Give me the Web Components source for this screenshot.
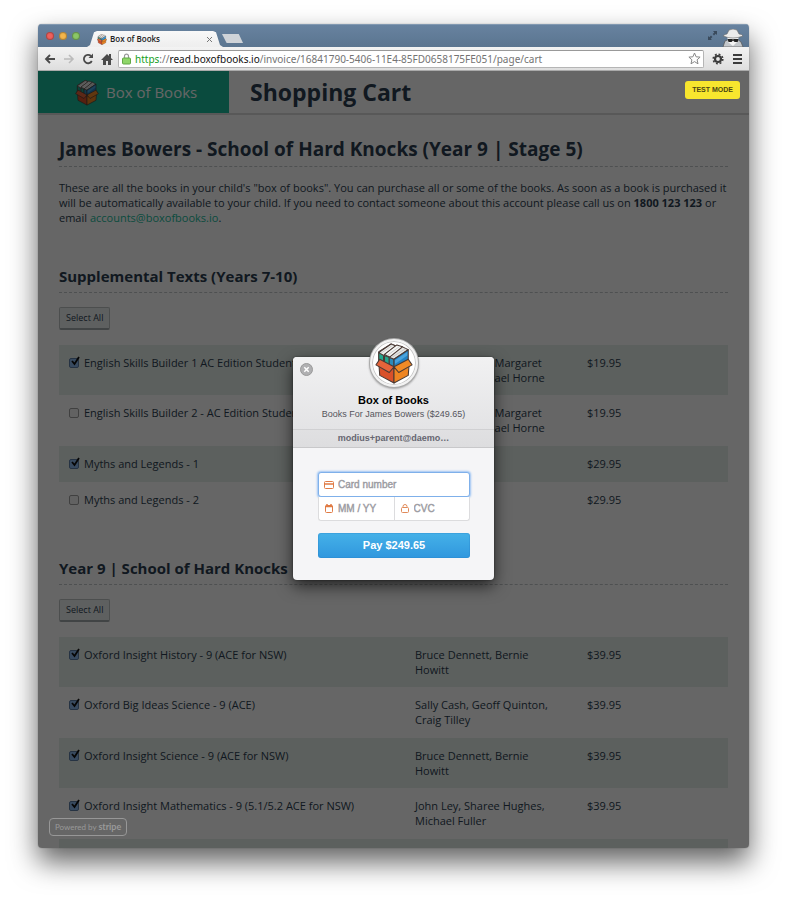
<!DOCTYPE html>
<html lang="en">
<head>
<meta charset="utf-8">
<title>Box of Books</title>
<style>
  html { height: 100%; background: #fff; }
  body {
    box-sizing: border-box; height: 100%; margin: 0; padding: 24px 38px 52px; overflow: hidden;
    font: 11px/15px "Open Sans", "Noto Sans", sans-serif; color: #2c3e50;
  }
</style>
</head>
<body>
<browser-window tab-title="Box of Books">
  <span slot="address"><span style="color:#15a01c">https</span>://<span style="color:#111">read.boxofbooks.io</span>/invoice/16841790-5406-11E4-85FD0658175FE051/page/cart</span>
  <cart-header heading="Shopping Cart">Box of Books</cart-header>
  <cart-intro heading="James Bowers - School of Hard Knocks (Year 9 | Stage 5)">These are all the books in your child's "box of books". You can purchase all or some of the books. As soon as a book is purchased it will be automatically available to your child. If you need to contact someone about this account please call us on <b>1800 123 123</b> or email <a href="mailto:accounts@boxofbooks.io" style="color:#1abc9c;text-decoration:none">accounts@boxofbooks.io</a>.</cart-intro>
  <book-section heading="Supplemental Texts (Years 7-10)">
    <book-item checked price="$19.95" authors="Mary Manning, Margaret McKenzie, Rachael Horne">English Skills Builder 1 AC Edition Student Book</book-item>
    <book-item price="$19.95" authors="Mary Manning, Margaret McKenzie, Rachael Horne">English Skills Builder 2 - AC Edition Student Book</book-item>
    <book-item checked price="$29.95" authors="Paul Stephens">Myths and Legends - 1</book-item>
    <book-item price="$29.95" authors="Paul Stephens">Myths and Legends - 2</book-item>
  </book-section>
  <book-section heading="Year 9 | School of Hard Knocks">
    <book-item checked price="$39.95" authors="Bruce Dennett, Bernie Howitt">Oxford Insight History - 9 (ACE for NSW)</book-item>
    <book-item checked price="$39.95" authors="Sally Cash, Geoff Quinton, Craig Tilley">Oxford Big Ideas Science - 9 (ACE)</book-item>
    <book-item checked price="$39.95" authors="Bruce Dennett, Bernie Howitt">Oxford Insight Science - 9 (ACE for NSW)</book-item>
    <book-item checked price="$39.95" authors="John Ley, Sharee Hughes, Michael Fuller">Oxford Insight Mathematics - 9 (5.1/5.2 ACE for NSW)</book-item>
    <book-item price="" authors=""></book-item>
  </book-section>
  <checkout-overlay slot="overlay">
    <checkout-dialog name="Box of Books" description="Books For James Bowers ($249.65)" email="modius+parent@daemo…" amount="$249.65"></checkout-dialog>
  </checkout-overlay>
</browser-window>

<script>
function define(name, html, setup) {
  const template = document.createElement('template');
  template.innerHTML = html;
  customElements.define(name, class extends HTMLElement {
    connectedCallback() {
      if (this.shadowRoot) return;
      const root = this.attachShadow({ mode: 'open' });
      root.append(template.content.cloneNode(true));
      root.querySelectorAll('[data-attr]').forEach(n => { n.textContent = this.getAttribute(n.dataset.attr); });
      if (setup) setup(this, root);
    }
  });
}

/* Open carton holding three books */
define('box-logo', `
<style>:host{display:block;flex:none} svg{display:block;width:100%;height:100%}</style>
<svg viewBox="-1 -1 40 44" aria-hidden="true" stroke="#4a3a35" stroke-width="1.1" stroke-linejoin="round">
  <path d="M3 9 L16 1 L21 3 L21 22 L3 20Z" fill="#e9e9e9"/>
  <path d="M3 10 L8 13 V26 L3 23Z" fill="#23a68c"/>
  <path d="M3 10 L16 1 L21 3 L8 13Z" fill="#f1f1ef"/>
  <path d="M5 11 L18 2" stroke="#bbb" fill="none" stroke-width=".7"/>
  <path d="M9 13 L14 15 V28 L9 26Z" fill="#23a68c"/>
  <path d="M14 15 L19 17 V29 L14 28Z" fill="#2d8ab9"/>
  <path d="M9 12 L22 2 L28 4 L15 15Z" fill="#f5f5f3"/>
  <path d="M14 15 L28 4 L34 7 L19 17Z" fill="#e4e4e2"/>
  <path d="M12 13 L25 3.500 M17 15 L31 6" stroke="#bbb" fill="none" stroke-width=".7"/>
  <path d="M19 17 L34 7 V22 L19 29Z" fill="#2382c4"/>
  <path d="M20 18 L33 9.500 V13 L20 22Z" fill="#4aa3dc" stroke="none"/>
  <path d="M3 21 L19 27 V42 L4 34Z" fill="#d9502a"/>
  <path d="M35 21 L19 27 V42 L34 34Z" fill="#ee8522"/>
  <path d="M4 17 L19 25 L14 31 L0 23Z" fill="#e5643a"/>
  <path d="M34 17 L19 25 L24 31 L38 23Z" fill="#f08a26"/>
</svg>`);

define('browser-window', `
<style>
  :host{display:flex;flex-direction:column;height:100%;border-radius:4px;overflow:hidden;background:#fff;
    box-shadow:0 0 1px rgba(0,0,0,.5),0 14px 28px rgba(0,0,0,.62)}
  .tabs{flex:none;display:flex;align-items:flex-end;height:23px;padding:0 5px 0 8px;
    background:linear-gradient(#6883a0,#5b7590);box-shadow:inset 0 1px #8299b1}
  .lights{display:flex;gap:5px;padding-bottom:7px}
  .lights i{width:8px;height:8px;border-radius:50%;box-shadow:inset 0 0 1px 1px rgba(0,0,0,.3)}
  .tab{display:flex;align-items:center;gap:3px;box-sizing:border-box;width:136px;height:16px;margin-left:7px;padding:0 11px 0 8px;
    background:linear-gradient(#f8f8f8,#eee);clip-path:polygon(0 100%,3px 88%,7px 8%,10px 0,126px 0,129px 8%,133px 88%,100% 100%);
    font:8px/14px "Open Sans","Noto Sans",sans-serif;font-weight:600;color:#222}
  .tab box-logo{width:10px;height:11px;margin-left:2px}
  .tab span{flex:1}
  button{display:flex;padding:0;border:0;background:none;color:inherit}
  .new{width:21px;height:9px;margin:0 0 4px -1px;background:#cfd3d8;clip-path:polygon(0 0,80% 0,100% 100%,22% 100%)}
  .space{flex:1}
  .bar{flex:none;display:flex;align-items:center;box-sizing:border-box;height:24px;padding:0 7px 0 6px;gap:7px;
    background:linear-gradient(#f3f3f3,#dedede);border-bottom:1px solid #aaa;color:#4a4a4a}
  .bar svg{display:block}
  .addr{flex:1;min-width:0;display:flex;align-items:center;box-sizing:border-box;height:18px;margin-left:-2px;padding:0 2px 0 3px;gap:4px;
    border:1px solid #b5b5b5;border-top-color:#999;border-radius:2px;background:#fff;font:10px/16px "Noto Sans",sans-serif;color:#737373;white-space:nowrap}
  .addr .url{flex:1;overflow:hidden}
  main{position:relative;flex:1;min-height:0;overflow:hidden}
</style>
<div class="tabs">
  <div class="lights"><i style="background:#f0605c"></i><i style="background:#f3b54b"></i><i style="background:#8bc766"></i></div>
  <div class="tab"><box-logo></box-logo><span data-attr="tab-title"></span>
    <button aria-label="Close tab"><svg width="5" height="5" viewBox="0 0 5 5"><path d="M0 0L5 5M5 0L0 5" stroke="#777"/></svg></button></div>
  <button class="new" aria-label="New tab"></button>
  <div class="space"></div>
  <svg width="11" height="11" viewBox="0 0 11 11" style="margin:0 4px 6px 0" fill="#3a4a5c"><path d="M6 1h4v4L8.700 3.700 7 5.400 5.700 4 7.300 2.400zM1 6l1.300 1.300L4 5.600 5.400 7 3.700 8.700 5 10H1z"/></svg>
  <svg width="22" height="18" viewBox="0 0 22 18"><path d="M1 18L3 12 8 10h7l4 3 2 5z" fill="#c3c7cb" stroke="#555" stroke-width=".7"/><path d="M5 6h12l-1 6-5 5-5-4z" fill="#f4f4f4"/><path d="M1 7Q3 5 5 5L7 1Q11-1 15 1L17 5Q20 5 21 7 11 11 1 7z" fill="#ececec" stroke="#666" stroke-width=".6"/><path d="M5.500 10h4.500l1 .6 1-.6H16.500l-.8 3h-3L11 11.600 9.500 13h-3z" fill="#222"/></svg>
</div>
<div class="bar">
  <button aria-label="Back"><svg width="12" height="12" viewBox="0 0 12 12"><path d="M11 6H2M6 2L2 6l4 4" fill="none" stroke="currentColor" stroke-width="1.800"/></svg></button>
  <button aria-label="Forward" style="color:#bbb"><svg width="12" height="12" viewBox="0 0 12 12"><path d="M1 6h9M6 2l4 4-4 4" fill="none" stroke="currentColor" stroke-width="1.600"/></svg></button>
  <button aria-label="Reload"><svg width="12" height="12" viewBox="0 0 12 12"><path d="M9.800 8A4.200 4.200 0 1 1 9 3" fill="none" stroke="currentColor" stroke-width="1.800"/><path d="M6.500 5H11V.6z" fill="currentColor"/></svg></button>
  <button aria-label="Home"><svg width="12" height="12" viewBox="0 0 12 12" fill="currentColor"><path d="M6 1L0 7h2v5h3V8h2v4h3V7h2L10 5V1H8v2z"/></svg></button>
  <div class="addr">
    <svg width="9" height="12" viewBox="0 0 9 12"><path d="M2.500 6V3.200a2 2 0 0 1 4 0V6" fill="none" stroke="#999" stroke-width="1.200"/><rect x=".5" y="5" width="8" height="6" rx="1" fill="#8ed668" stroke="#62a846"/></svg>
    <div class="url"><slot name="address"></slot></div>
    <button aria-label="Bookmark this page"><svg width="13" height="13" viewBox="0 0 13 13"><path d="M6.500 1l1.600 3.800 4 .3-3 2.700.9 4-3.500-2.200L3 11.800l.9-4-3-2.700 4-.3z" fill="#fff" stroke="#888"/></svg></button>
  </div>
  <button aria-label="Settings" style="margin-left:1px"><svg width="12" height="12" viewBox="0 0 12 12"><circle cx="6" cy="6" r="3" fill="none" stroke="#3c3c3c" stroke-width="2.200"/><circle cx="6" cy="6" r="4.800" fill="none" stroke="#3c3c3c" stroke-width="1.600" stroke-dasharray="1.900 1.870"/></svg></button>
  <button aria-label="Menu" style="margin-left:2px"><svg width="9" height="10" viewBox="0 0 9 10"><path d="M0 1h9M0 5h9M0 9h9" stroke="#3c3c3c" stroke-width="2"/></svg></button>
</div>
<main><slot></slot><slot name="overlay"></slot></main>`);

define('cart-header', `
<style>
  :host{display:flex;align-items:stretch;height:42px;border-bottom:2px solid #dcdcdc}
  .brand{display:flex;align-items:center;gap:7px;box-sizing:border-box;width:191px;padding-left:37px;background:#1abc9c;color:#fff;font-size:15px;line-height:20px}
  box-logo{width:24px;height:27px}
  h1{margin:0 0 0 21px;font-size:23px;line-height:43px;font-weight:700}
</style>
<div class="brand"><box-logo></box-logo><span><slot></slot></span></div>
<h1 data-attr="heading"></h1>`);

define('cart-intro', `
<style>
  :host{display:block;padding:22px 21px 2px}
  h2{margin:0;padding-bottom:5px;border-bottom:1px dashed #c4c8ca;font-size:19px;line-height:24px;font-weight:700}
  p{margin:13px 0 0}
</style>
<h2 data-attr="heading"></h2><p><slot></slot></p>`);

define('book-section', `
<style>
  :host{display:block;padding:38px 21px 0}
  h3{margin:0;padding-bottom:5px;border-bottom:1px dashed #c4c8ca;font-size:15px;line-height:22px;font-weight:700}
  .all{display:block;box-sizing:border-box;height:23px;margin:14px 0 15px;padding:0 6px;border:1px solid #bdc3c4;border-bottom:2px solid #a3abac;border-radius:2px;
    background:#ecf0f1;font:9px/20px "Open Sans","Noto Sans",sans-serif;color:#2c3e50}
  table{width:100%;border-collapse:collapse;table-layout:fixed}
  .by{width:172px}.cost{width:151px}
  td{height:16px;padding:10px 20px 10px 10px;vertical-align:top}
  tr:nth-child(odd){background:#e6efeb}
  tr:nth-child(even) td{padding-bottom:11px}
  label{display:flex;gap:5px;white-space:nowrap}
  input{appearance:none;box-sizing:border-box;display:block;width:10px;height:10px;margin:3px 0 0;border:1px solid #a0a0a0;border-radius:2px;background:#f4f4f4}
  input:checked{border-color:#5f7fa8;background:#8db9ee}
  .tick{position:relative;display:block;height:15px}
  .tick svg{position:absolute;left:1px;top:1px;display:none}
  input:checked + svg{display:block}
</style>
<h3 data-attr="heading"></h3>
<button class="all">Select All</button>
<table><colgroup><col><col class="by"><col class="cost"></colgroup><tbody></tbody></table>`,
(host, root) => {
  const body = root.querySelector('tbody');
  host.querySelectorAll('book-item').forEach(item => {
    const row = body.insertRow();
    const first = row.insertCell();
    if (item.textContent) {
      first.innerHTML = '<label><span class="tick"><input type="checkbox"><svg width="11" height="11" viewBox="0 0 11 11"><path d="M2 5l2.500 3L9 1" fill="none" stroke="#111" stroke-width="1.800"/></svg></span><span class="name"></span></label>';
      first.querySelector('input').checked = item.hasAttribute('checked');
      first.querySelector('.name').textContent = item.textContent;
    }
    row.insertCell().textContent = item.getAttribute('authors');
    row.insertCell().textContent = item.getAttribute('price');
  });
  root.querySelector('.all').addEventListener('click', () => root.querySelectorAll('input').forEach(i => { i.checked = true; }));
});

define('checkout-overlay', `
<style>
  :host{position:absolute;inset:0;display:flex;align-items:center;justify-content:center;background:rgba(0,0,0,.6)}
  .test{position:absolute;top:10px;right:9px;padding:1px 7px;border-radius:3px;background:#f8e62e;color:#4c4714;font:bold 7px/16px "Liberation Sans",Arial,sans-serif}
  .stripe{position:absolute;left:11px;bottom:12px;padding:0 5px;border:1px solid #979797;border-radius:4px;color:#999;font:8px/15px Lato,"Open Sans",sans-serif;text-decoration:none}
  .stripe b{font-size:9px}
</style>
<div class="test">TEST MODE</div>
<a class="stripe" href="#stripe">Powered by <b>stripe</b></a>
<slot></slot>`);

define('checkout-dialog', `
<style>
  :host{display:block;width:201px;font-family:"Liberation Sans",Arial,sans-serif;text-align:center}
  .logo{position:relative;z-index:1;display:flex;align-items:center;justify-content:center;box-sizing:border-box;width:48px;height:48px;margin:0 auto -30px;
    border:2px solid #f2f2f2;border-radius:50%;background:#fff;box-shadow:0 0 0 1px #aaa,inset 0 0 0 1px #c8c8c8,0 1px 2px 1px rgba(0,0,0,.3)}
  .logo box-logo{width:38px;height:42px}
  form{position:relative;border-radius:4px;background:#f5f5f7;box-shadow:0 6px 16px rgba(0,0,0,.65),0 0 2px rgba(0,0,0,.5);overflow:hidden}
  header{padding-top:36px;background:linear-gradient(#f1f1f2,#e0e0e2);border-bottom:1px solid #c8c8ca}
  h2{margin:0;font-size:11px;line-height:15px;color:#000}
  p{margin:0;font-size:9px;line-height:13px;color:#55555c}
  .mail{margin-top:8px;padding:2px 0;border-top:1px solid #d0d0d2;background:rgba(0,0,0,.01);font-weight:bold;font-size:9px;color:#666670}
  .close{position:absolute;left:7px;top:6px;display:flex;padding:0;border:0;background:none}
  .fields{padding:24px 24px 22px 25px}
  .card,.row{display:flex}
  label{flex:1;min-width:0;display:flex;align-items:center;gap:4px;box-sizing:border-box;height:24px;padding:0 5px;background:#fff;border:1px solid #dcdcde;border-top:0}
  .card label{height:25px;border:1px solid #7fb0ea;border-radius:3px;box-shadow:0 0 2px 1px #9cc3f3}
  .row label:first-child{border-right:0;border-radius:0 0 0 3px}
  .row label:last-child{border-radius:0 0 3px 0}
  label svg{flex:none}
  input{flex:1;min-width:0;width:0;padding:0;border:0;outline:0;background:none;font:10px/16px "Liberation Sans",Arial,sans-serif;color:#333}
  input::placeholder{color:#9b9ba1;opacity:1;-webkit-text-stroke:.4px #9b9ba1}
  .pay{display:block;width:100%;height:25px;margin-top:12px;padding:0;border:0;border-radius:3px;background:linear-gradient(#45b1e8,#3097de);
    box-shadow:inset 0 0 0 1px rgba(40,130,200,.3);color:#fff;font:bold 11px/25px "Liberation Sans",Arial,sans-serif}
</style>
<div class="logo"><box-logo></box-logo></div>
<form>
  <header>
    <button class="close" type="button" aria-label="Close"><svg width="13" height="13" viewBox="0 0 13 13"><circle cx="6.500" cy="6.500" r="6" fill="#b0b0b2" stroke="#999"/><path d="M4.300 4.300l4.400 4.400M8.700 4.300L4.300 8.700" stroke="#fff" stroke-width="1.500"/></svg></button>
    <h2 data-attr="name"></h2><p data-attr="description"></p><p class="mail" data-attr="email"></p>
  </header>
  <div class="fields">
    <div class="card"><label><svg width="10" height="8" viewBox="0 0 10 8"><rect x=".5" y=".5" width="9" height="7" rx="1" fill="none" stroke="#e07b45"/><path d="M0 3h10" stroke="#e07b45" stroke-width="1.500"/></svg><input aria-label="Card number" placeholder="Card number"></label></div>
    <div class="row">
      <label><svg width="10" height="9" viewBox="0 0 10 9"><rect x="1.500" y="1.500" width="7" height="7" rx="1" fill="none" stroke="#e07b45"/><path d="M1 2.500h8M3 0v2M7 0v2" stroke="#e07b45" stroke-width="1.500"/></svg><input aria-label="Expiry" placeholder="MM / YY"></label>
      <label><svg width="10" height="9" viewBox="0 0 10 9"><rect x="1.500" y="3.500" width="7" height="5" rx="1" fill="none" stroke="#e08a5a"/><path d="M3 3.500V2.500a2 2 0 0 1 4 0v1" fill="none" stroke="#e08a5a"/></svg><input aria-label="CVC" placeholder="CVC"></label>
    </div>
    <button class="pay" type="button">Pay <span data-attr="amount"></span></button>
  </div>
</form>`);
</script>
</body>
</html>
